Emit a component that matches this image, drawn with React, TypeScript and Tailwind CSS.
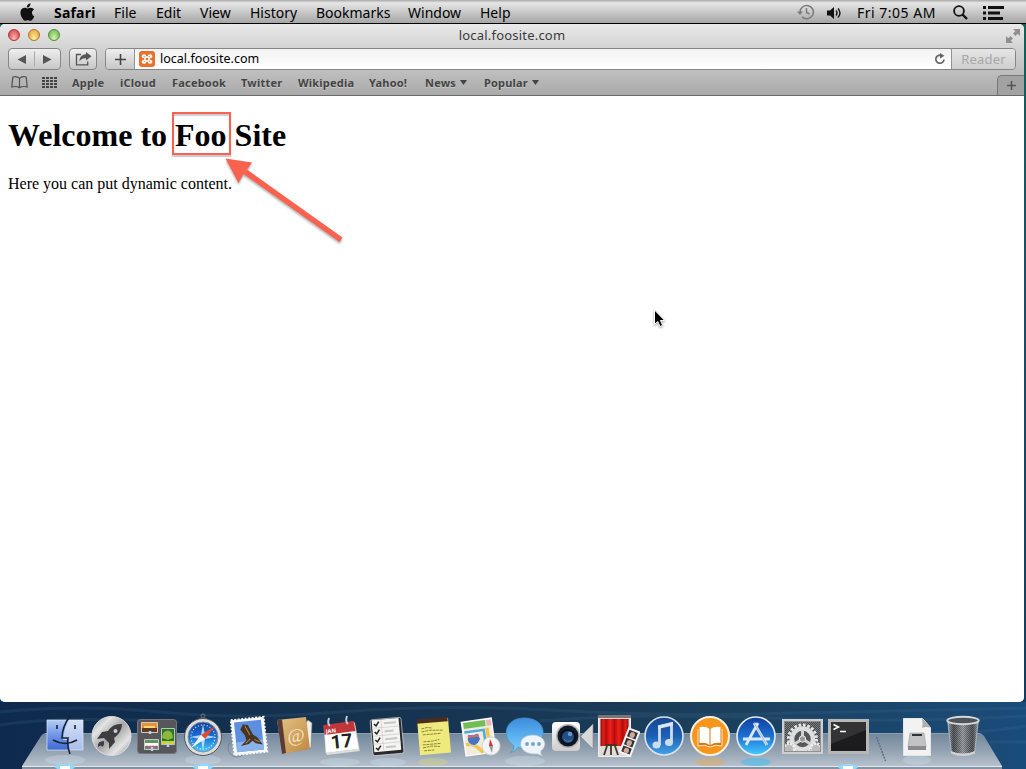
import React from "react";

const menus = [
  { label: "File", w: "w-[42px]" },
  { label: "Edit", w: "w-[44px]" },
  { label: "View", w: "w-[50px]" },
  { label: "History", w: "w-[66px]" },
  { label: "Bookmarks", w: "w-[92px]" },
  { label: "Window", w: "w-[72px]" },
  { label: "Help", w: "w-[40px]" },
];

const bookmarks = [
  { label: "Apple", w: "w-[48px]" },
  { label: "iCloud", w: "w-[52px]" },
  { label: "Facebook", w: "w-[69px]" },
  { label: "Twitter", w: "w-[57px]" },
  { label: "Wikipedia", w: "w-[71px]" },
  { label: "Yahoo!", w: "w-[56px]" },
  { label: "News", w: "w-[59px]", menu: true },
  { label: "Popular", w: "w-[60px]", menu: true },
];

function MenuBar() {
  return (
    <header className="flex h-6 w-full shrink-0 items-center border-b border-black bg-linear-to-b from-[#a8a8a8] via-[#e6e6e6] via-12% to-[#a6a6a6] pt-[2px] text-[14px] text-black">
      <svg className="ml-[19px] h-[19px] w-[17px]" viewBox="0 0 17 19">
        <path d="M11.5.3c.1 1.2-.4 2.3-1.1 3.1-.7.8-1.7 1.3-2.6 1.2-.1-1.1.4-2.2 1-2.9C9.500.9 10.600.4 11.500.3z" fill="#111" />
        <path d="M15 6.500c-1.400.8-2 2-2 3.200 0 1.700 1 2.900 2.300 3.500-.4 1.200-1 2.200-1.800 3.200-.7.9-1.400 1.400-2.300 1.400-.9 0-1.300-.5-2.500-.5s-1.600.5-2.500.5c-1 0-1.700-.8-2.400-1.700C1.800 13.500.8 9.900 1.800 7.400 2.500 5.700 4 4.700 5.500 4.700c1.200 0 2 .7 3.100.7 1 0 1.800-.7 3.200-.7 1.200 0 2.400.7 3.200 1.800z" fill="#111" />
      </svg>
      <span className="ml-[18px] w-[60px] font-bold tracking-[0.2px]">Safari</span>
      {menus.map((m) => (
        <span key={m.label} className={m.w}>{m.label}</span>
      ))}
      <div className="ml-auto flex items-center">
        <svg className="mr-[12px] h-[17px] w-[18px]" viewBox="0 0 18 17" fill="none" stroke="#7b7b7b" strokeWidth="1.5">
          <path d="M3 8A6.700 6.700 0 1 1 5 12.900M9.500 4v4.500l3 1.500" />
          <path d="M0 7.500h6L3 11z" fill="#7b7b7b" stroke="none" />
        </svg>
        <svg className="mr-[15px] h-[14px] w-[15px]" viewBox="0 0 15 14">
          <path d="M0 4.500h3L7 1v12L3 9.500H0z" fill="#111" />
          <path d="M9 4.500q2 2.500 0 5M11 2.500q4 4.500 0 9" fill="none" stroke="#111" strokeWidth="1.400" />
        </svg>
        <span className="w-[96px] tracking-[0.5px] whitespace-nowrap">Fri 7:05 AM</span>
        <svg className="h-[15px] w-[15px]" viewBox="0 0 15 15" fill="none" stroke="#111">
          <circle cx="6" cy="6" r="4.900" strokeWidth="1.800" />
          <path d="M9.500 9.500 14 14" strokeWidth="2.400" />
        </svg>
        <svg className="mr-[22px] ml-[15px] h-[14px] w-[21px]" viewBox="0 0 21 14" fill="#111">
          <path d="M0 0h3v3H0zM5 0h16v3H5zM0 5.500h3v3H0zM5 5.500h12v3H5zM0 11h3v3H0zM5 11h15v3H5z" />
        </svg>
      </div>
    </header>
  );
}

function TitleBar() {
  return (
    <div className="flex h-6 items-center">
      <div className="-mt-[2px] ml-2 flex w-[56px] gap-2">
        <i className="h-3 w-3 rounded-full border border-[#a33b3b] bg-radial-[at_50%_85%] from-[#ffb9b4] to-[#d42f3b]" />
        <i className="h-3 w-3 rounded-full border border-[#a9762f] bg-radial-[at_50%_85%] from-[#fff19a] to-[#e3942a]" />
        <i className="h-3 w-3 rounded-full border border-[#518a3b] bg-radial-[at_50%_85%] from-[#d5f7ac] to-[#62ac45]" />
      </div>
      <div className="flex-1 pr-[4px] text-center text-[13px] tracking-[0.2px] text-[#3b3b3b]">local.foosite.com</div>
      <svg className="-mt-[1px] mr-[4px] ml-[42px] h-[14px] w-[14px]" viewBox="0 0 14 14" fill="#8f8f8f">
        <path d="M7 0h7v7l-2.300-2.300L9.500 7 7 4.500l2.300-2.200zM0 7l2.300 2.300L4.500 7 7 9.500l-2.300 2.200L7 14H0z" />
      </svg>
    </div>
  );
}

function Toolbar() {
  return (
    <div className="flex h-[22px] px-2 text-[#555]">
      <div className="flex w-[53px] items-center rounded-[4px] border border-[#858585] bg-linear-to-b from-[#efefef] to-[#c7c7c7]">
        <svg className="h-5 w-[51px]" viewBox="0 0 51 20" fill="#555">
          <path d="M17 6v9L8.500 10.500zM34 6v9l8.500-4.500z" />
          <path d="M25 2.500h1v15h-1z" fill="#aaa" />
        </svg>
      </div>
      <div className="ml-2 flex w-[28px] items-center justify-center rounded-[4px] border border-[#858585] bg-linear-to-b from-[#efefef] to-[#c7c7c7]">
        <svg className="h-[14px] w-[17px]" viewBox="0 0 17 14">
          <path d="M6 2.500H1.500v10.300h11.200V9.500" fill="none" stroke="#555" strokeWidth="1.300" />
          <path d="M11 0l5.500 4.300L11 8.500V6.200C8 6 6 7 4.500 9.500 4.500 5 7 2.500 11 2.300z" fill="#555" />
        </svg>
      </div>
      <div className="ml-2 flex flex-1 overflow-hidden rounded-[4px] border border-[#858585]">
        <div className="flex w-[29px] items-center justify-center border-r border-[#929292] bg-linear-to-b from-[#efefef] to-[#c7c7c7]">
          <svg className="h-[11px] w-[11px]" viewBox="0 0 11 11"><path d="M5.500 0v11M0 5.500h11" stroke="#444" strokeWidth="1.600" /></svg>
        </div>
        <div className="flex flex-1 items-center bg-linear-to-b from-[#f2f2f2] to-white pl-1">
          <svg className="h-4 w-4" viewBox="0 0 16 16">
            <rect width="16" height="16" rx="3" fill="#e8722c" />
            <path d="M6.300 5.700Q8 6.600 9.700 5.700M6.300 10.300Q8 9.400 9.700 10.300M5.700 6.300Q6.600 8 5.700 9.700M10.300 6.300Q9.400 8 10.300 9.700" fill="none" stroke="#fff" strokeWidth="1.700" />
            <path d="M5.600 6.500Q3.500 6.500 3.500 5.200 3.500 4 4.900 4 6.500 4 6.500 5.600M10.400 6.500q2.100 0 2.100-1.300Q12.500 4 11.100 4 9.500 4 9.500 5.600M5.600 9.500q-2.100 0-2.100 1.300Q3.500 12 4.900 12q1.600 0 1.600-1.600M10.400 9.500q2.100 0 2.100 1.300 0 1.200-1.400 1.200-1.600 0-1.600-1.600" fill="none" stroke="#fff" strokeWidth="1.700" />
          </svg>
          <span className="ml-[5px] flex-1 pt-[1px] text-[12.500px] text-black">local.foosite.com</span>
          <svg className="mr-[5px] h-3 w-3" viewBox="0 0 12 12">
            <path d="M7 2.200A4.100 4.100 0 1 0 10 6.500" fill="none" stroke="#666" strokeWidth="1.700" />
            <path d="M6 0l4.500 2.800L6 5.500z" fill="#666" />
          </svg>
        </div>
        <div className="flex w-[64px] items-center justify-center border-l border-[#929292] bg-linear-to-b from-[#e6e6e6] to-[#cecece] pt-[1px] text-[13px] tracking-[0.2px] text-[#a8a8a8]">Reader</div>
      </div>
    </div>
  );
}

function BookmarksBar() {
  return (
    <div className="flex h-[25px] items-center text-[11px] font-bold tracking-[0.2px] text-[#444] [text-shadow:0_1px_0_#c8c8c8]">
      <svg className="ml-[11px] h-[13px] w-[17px]" viewBox="0 0 17 13" fill="none" stroke="#505050" strokeWidth="1.200">
        <path d="M8.500 2.300Q6-.2 1.800 1L.8 11q4.500-1.300 7.700.8 3.200-2.100 7.700-.8l-1-10Q11-.2 8.500 2.300zM8.500 2.300v9.500" />
      </svg>
      <svg className="ml-[14px] h-[11px] w-[15px]" viewBox="0 0 15 11" fill="#444">
        {[0, 3, 6, 9].map((y) => [0, 4, 8, 12].map((x) => <rect key={`${x}-${y}`} x={x} y={y} width="3" height="2" />))}
      </svg>
      <div className="ml-[15px] flex flex-1 pt-[2px]">
        {bookmarks.map((b) => (
          <span key={b.label} className={`${b.w} flex items-center gap-[4px] whitespace-nowrap`}>
            {b.label}
            {b.menu && <svg className="mb-[3px] h-[5px] w-[7px]" viewBox="0 0 7 5"><path d="M0 0h7L3.500 5z" fill="#444" /></svg>}
          </span>
        ))}
      </div>
      <div className="mt-[5px] flex h-5 w-[27px] items-center justify-center rounded-tl-[5px] border-t border-l border-[#777] bg-[#a2a2a2]">
        <svg className="h-[9px] w-[9px]" viewBox="0 0 9 9"><path d="M4.500 0v9M0 4.500h9" stroke="#555" strokeWidth="1.600" /></svg>
      </div>
    </div>
  );
}

function Page() {
  return (
    <main className="relative flex-1 bg-white px-2 pt-[21px] font-['Liberation_Serif',serif] text-black">
      <h1 className="text-[32px] leading-[37px] font-bold">Welcome to Foo Site</h1>
      <p className="mt-[21px] text-[16px] leading-[18px]">Here you can put dynamic content.</p>
      <div className="absolute top-[16px] left-[172px] h-[43px] w-[59px] border-2 border-[#fa6250] shadow-[0_2px_1px_rgba(0,0,40,0.2),inset_0_2px_1px_rgba(0,0,40,0.2)]" />
      <svg className="absolute top-[58px] left-[220px] h-[96px] w-[130px] drop-shadow-[0_2px_1px_rgba(0,0,0,0.3)]" viewBox="0 0 130 96">
        <path d="M5.500 4.500 32 8.500l-5 7L122.500 83.500l-3 4.500L23.500 20 18.500 29z" fill="#fa6250" />
      </svg>
      <svg className="absolute top-[213px] left-[653px] h-[20px] w-[13px] drop-shadow-[0_1px_1px_rgba(0,0,0,0.4)]" viewBox="0 0 13 20">
        <path d="M1.500 1v14.500l3.300-3 2.300 5 2.500-1.200-2.200-4.800h4.300z" fill="#000" stroke="#fff" strokeWidth="1" />
      </svg>
    </main>
  );
}

function Tile({ children }: { children: React.ReactNode }) {
  return <svg className="h-[54px] w-[46px] shrink-0" viewBox="0 0 46 54">{children}</svg>;
}

function Defs() {
  return (
    <defs>
      <linearGradient id="sea" x1="0" y1="0" x2="1" y2="0"><stop stopColor="#0e2b4e" /><stop offset=".35" stopColor="#15324f" /><stop offset=".7" stopColor="#1b3f5c" /><stop offset="1" stopColor="#1a4c7a" /></linearGradient>
      <linearGradient id="shelf" x1="0" y1="0" x2="0" y2="1"><stop stopColor="#71879c" /><stop offset=".55" stopColor="#94a3b2" /><stop offset="1" stopColor="#b7c1cc" /></linearGradient>
      <linearGradient id="blue" x1="0" y1="0" x2="0" y2="1"><stop stopColor="#123f9c" /><stop offset=".5" stopColor="#1c6fd4" /><stop offset="1" stopColor="#45cbff" /></linearGradient>
      <linearGradient id="navy" x1="0" y1="0" x2="0" y2="1"><stop stopColor="#164791" /><stop offset=".5" stopColor="#1d5fb5" /><stop offset="1" stopColor="#44a3e9" /></linearGradient>
      <linearGradient id="finder" x1="0" y1="0" x2="0" y2="1"><stop stopColor="#b5ccf6" /><stop offset=".5" stopColor="#7096e6" /><stop offset="1" stopColor="#3f6ad2" /></linearGradient>
      <linearGradient id="metal" x1="0" y1="0" x2="1" y2="1"><stop stopColor="#8d8d8d" /><stop offset=".25" stopColor="#e4e4e4" /><stop offset=".5" stopColor="#a4a4a4" /><stop offset=".75" stopColor="#e4e4e4" /><stop offset="1" stopColor="#888" /></linearGradient>
      <linearGradient id="gold" x1="0" y1="0" x2="1" y2="1"><stop stopColor="#e6c384" /><stop offset="1" stopColor="#bd8742" /></linearGradient>
      <linearGradient id="paper" x1="0" y1="0" x2="0" y2="1"><stop stopColor="#fff" /><stop offset="1" stopColor="#ccc" /></linearGradient>
      <linearGradient id="red" x1="0" y1="0" x2="1" y2="0"><stop stopColor="#8d0508" /><stop offset=".1" stopColor="#e2221a" /><stop offset=".2" stopColor="#b80b0c" /><stop offset=".35" stopColor="#ee2219" /><stop offset=".5" stopColor="#b80b0c" /><stop offset=".65" stopColor="#ee2219" /><stop offset=".8" stopColor="#b00a0b" /><stop offset=".9" stopColor="#e2221a" /><stop offset="1" stopColor="#8d0508" /></linearGradient>
      <linearGradient id="bubble" x1="0" y1="0" x2="0" y2="1"><stop stopColor="#3b8cdd" /><stop offset="1" stopColor="#7bd3ff" /></linearGradient>
      <linearGradient id="basket" x1="0" y1="0" x2="1" y2="0"><stop stopColor="#fff" stopOpacity=".5" /><stop offset=".2" stopColor="#222" stopOpacity=".3" /><stop offset=".5" stopColor="#fff" stopOpacity=".3" /><stop offset=".8" stopColor="#222" stopOpacity=".25" /><stop offset="1" stopColor="#fff" stopOpacity=".45" /></linearGradient>
      <pattern id="mesh" width="2" height="2" patternUnits="userSpaceOnUse"><rect width="2" height="2" fill="#777c81" /><rect width="1" height="1" fill="#44494e" /><rect x="1" y="1" width="1" height="1" fill="#44494e" /></pattern>
    </defs>
  );
}

function Dock() {
  return (
    <footer className="relative h-[67px] w-full overflow-hidden">
      <svg className="absolute inset-0 h-[67px] w-full" viewBox="0 0 1026 67">
        <Defs />
        <path d="M0 0h1026v67H0z" fill="url(#sea)" />
        <path d="M0 10q80-8 160 0t180 0 210-2 200 4 276-6M0 23q60-9 180-3M540 19q100-8 230-3t256-2M900 28q60 7 126-4M990 40h36" fill="none" stroke="#477596" strokeWidth="3" opacity=".18" />
        <path d="M46 31h933q3 0 5 3l18 30H22l19-30q2-3 5-3z" fill="url(#shelf)" />
        <path d="M45 31.500h935" stroke="#8c9eaf" strokeWidth="1" />
        <path d="M22 64h980v1.500H22z" fill="#e0e7ed" />
        <path d="M22 65.500h980v1.500H22z" fill="#8593a1" />
        <g fill="#dceeff" opacity=".25"><ellipse cx="65" cy="58" rx="20" ry="5" /><ellipse cx="203" cy="58" rx="18" ry="5" /><ellipse cx="340" cy="60" rx="20" ry="4" /><ellipse cx="388" cy="60" rx="18" ry="4" /><ellipse cx="525" cy="59" rx="20" ry="5" /><ellipse cx="917" cy="58" rx="14" ry="5" /></g>
        <ellipse cx="710" cy="60" rx="15" ry="4" fill="#e4a960" opacity=".55" />
        <ellipse cx="756" cy="60" rx="15" ry="4" fill="#49bbef" opacity=".6" />
        <ellipse cx="433" cy="60" rx="15" ry="4" fill="#d8d477" opacity=".4" />
        {[65, 203, 848].map((x) => <g key={x}><ellipse cx={x} cy="65" rx="10" ry="3" fill="#8ddcff" /><rect x={x - 5} y="64" width="10" height="3" fill="#fff" /></g>)}
      </svg>
      <div className="relative mt-[5px] ml-[42px] flex">
        <Tile>
          <path d="M5 13h36v30H5z" fill="url(#finder)" stroke="#dbe7f8" strokeWidth=".7" />
          <path d="M27 13h14v30H27l-1-10h-5q1-12 6-20z" fill="#e6ecf6" opacity=".65" />
          <path d="M28 9q-8 11-8 22h6q-1 8 2 16" fill="none" stroke="#172434" strokeWidth="1.600" />
          <path d="M15 18v4M33 18v4M11 33q12 7 24 0" fill="none" stroke="#172434" strokeWidth="1.600" />
        </Tile>
        <Tile>
          <circle cx="23.500" cy="29" r="19.500" fill="url(#metal)" stroke="#ddd" />
          <path d="M34 17q-9-1-14 7l-6 1-5 7 7-1 5 5 0 6 6-7-1-4q8-6 8-14zM16 34q-7 0-6 6 4-3 4 0 2-1 2-3M18 36l-2 4" fill="#3d3d40" />
          <circle cx="27.500" cy="24" r="2" fill="#ccc" />
        </Tile>
        <Tile>
          <rect x="3.500" y="12.500" width="39" height="34" rx="3" fill="#56565b" stroke="#77777b" />
          <g stroke="#eee" strokeWidth=".7"><path d="M7.500 15.500h16v10h-16z" fill="#e6913a" /><path d="M27.500 21.500h13v16h-13z" fill="#27772e" /><path d="M10.500 32.500h14v10h-14z" fill="#5d9560" /></g>
          <path d="M8 21h15v4H8z" fill="#5e3a26" /><path d="M10 19h11v2H10z" fill="#ffd76b" />
          <path d="M29 26q5-5 9 0l1 5-5 2-6-2z" fill="#8eb73c" /><path d="M28 34h12v3H28z" fill="#c9d52b" />
          <path d="M11 36h13v3H11z" fill="#f7f7f7" /><path d="M12 40h11" stroke="#ca4887" strokeWidth="2.500" strokeDasharray="2 1" />
          <path d="M16 24v3M34 36v4M18 40v4" stroke="#b4d0f2" strokeWidth="2.500" />
        </Tile>
        <Tile>
          <circle cx="23" cy="9" r="2" fill="none" stroke="#777" />
          <circle cx="23" cy="30" r="18.500" fill="#ddd" stroke="#52575c" />
          <circle cx="23" cy="30" r="15" fill="url(#blue)" stroke="#879097" />
          <circle cx="23" cy="30" r="12" fill="none" stroke="#d8f4ff" strokeWidth="1.200" strokeDasharray="1 2" />
          <path d="M23 17l2 11 11 2-11 2-2 12-2-12-11-2 11-2z" fill="#d4efff" opacity=".8" />
          <path d="M35 19L25 32l-4-4z" fill="#e64b27" /><path d="M11 41l10-13 4 4z" fill="#f6f6f2" />
        </Tile>
        <Tile>
          <circle cx="11" cy="41" r="9" fill="none" stroke="#5c6d7d" opacity=".5" />
          <g transform="rotate(-6 23 29)"><path d="M6.500 11.500h33v35h-33z" fill="#f6f7f7" stroke="#f6f7f7" strokeWidth="2" strokeDasharray="2 1.500" /><path d="M9.500 14h27v30h-27z" fill="#5c8fe0" /><path d="M9.500 34h27v10h-27z" fill="#8ab3ea" />
          <path d="M18 17l5 1 4 10 4 3 5 8-7-2-3-3-4 3-8 1 6-5-1-5-4-6z" fill="#49351f" /><path d="M20 19l4 9M24 32l-5 4M28 33l5 3" stroke="#a88a55" strokeWidth="1" /></g>
        </Tile>
        <Tile>
          <path d="M11 46l28-5 1-25-4-3z" fill="#eee" stroke="#777" strokeWidth=".6" />
          <path d="M5 13l29-3 4 32-28 5z" fill="url(#gold)" /><path d="M5 13l5-.5L14 46l-4 1z" fill="#593c38" />
          <text x="15" y="35" fill="#f5e5c3" fontFamily="Liberation Serif" fontSize="19" transform="rotate(-7 23 28)">@</text>
        </Tile>
        <Tile>
          <path d="M6 20l31-4 5 27-34 5z" fill="#aaa" /><path d="M6 19l30-4 5 27-33 4z" fill="#fff" stroke="#ddd" strokeWidth=".6" />
          <path d="M5.500 18l30-4 2 10-31 4z" fill="#c2353a" /><path d="M11 11q-2 6 1 8M29 9q-2 6 1 8" fill="none" stroke="#c6cbd0" strokeWidth="2" />
          <text x="8" y="26.500" fill="#fff" fontFamily="Open Sans" fontWeight="700" fontSize="5.500" transform="rotate(-7 8 26)">JAN</text>
          <text x="13.500" y="42" fill="#222" fontFamily="Roboto" fontWeight="700" fontSize="19" transform="rotate(-6 13 42)">17</text>
          <path d="M8 46l33-4 1 2-33 4z" fill="#ddd" />
        </Tile>
        <Tile>
          <g transform="rotate(-5 23 29)"><rect x="7.500" y="11.500" width="31" height="36" rx="2" fill="#29292b" stroke="#eee" strokeWidth=".6" /><path d="M9 12h27v32H9z" fill="#f4f4f2" />
          <path d="M9 20h27M9 28h27M9 36h27" stroke="#d6d6d6" /><path d="M18.500 12v32" stroke="#e7a9a9" strokeWidth=".5" /><path d="M11 16l2 2 3-4M11 24l2 2 3-4M11 32l2 2 3-4M11 40l2 2 3-4" fill="none" stroke="#222" strokeWidth="1.500" /><path d="M21 16h12M21 24h9M21 32h12M21 40h10" stroke="#c6c6c6" strokeWidth="2" /></g>
        </Tile>
        <Tile>
          <g transform="rotate(-5 23 29)"><path d="M8.500 12h31v35h-31z" fill="#f0e97c" /><path d="M8 11h31v4.500H8z" fill="#4b2d20" />
          <path d="M12 21l6-1 5 1M12 24l8-1 13 1M13 27h18M13 34h9l7-1M12 37h18M12 40l9-1 8 1M13 43h10" fill="none" stroke="#77722e" strokeWidth=".8" strokeDasharray="3 .7" /></g>
        </Tile>
        <Tile>
          <g transform="rotate(-8 23 29)"><path d="M7.500 13h30v34h-30z" fill="#f1ebda" stroke="#fafafa" strokeWidth="1.500" /><path d="M9 14h22v6H9z" fill="#72bd55" /><path d="M32 14h5v6h-5z" fill="#e9b6c0" />
          <path d="M9 23.500h19.500v18" fill="none" stroke="#50a8e1" strokeWidth="2.500" /><path d="M9 36q8-2 16 10M32 22v22" fill="none" stroke="#efc64a" strokeWidth="3.500" /><path d="M12 26q5 2 10 0l2 6q-2 5-7 6-6-2-6-7z" fill="#4776bd" stroke="#fff" strokeWidth=".6" /><path d="M12 28.500h11" stroke="#d96869" strokeWidth="2" /></g>
          <circle cx="35" cy="39" r="9" fill="#f4f4f4" stroke="#d1d1d1" /><path d="M34 32l3 7h-4z" fill="#cf312b" /><path d="M33 39h4l-1 7z" fill="#999" />
        </Tile>
        <Tile>
          <path d="M8 46q5-3 4-7C-2 29 4 11 22 11c25 0 25 26 3 30q-7 1-9-1-2 4-8 6z" fill="url(#bubble)" stroke="#4a93c9" strokeWidth=".7" />
          <path d="M41 49q-3-2-2-5c8-6 3-16-8-16-17 0-16 18 0 19h5q1 1 5 2z" fill="#edf5fa" stroke="#acb9c8" strokeWidth=".7" />
          <g fill="#77a3c1"><circle cx="25" cy="37" r="1.900" /><circle cx="31" cy="37" r="1.900" /><circle cx="37" cy="37" r="1.900" /></g>
        </Tile>
        <Tile>
          <rect x="4" y="15" width="28" height="29" rx="4" fill="url(#paper)" /><circle cx="20" cy="29" r="12" fill="#b5b5b5" /><circle cx="20" cy="29" r="10.500" fill="#111b2a" /><circle cx="20" cy="30" r="7" fill="#244f82" stroke="#09101b" strokeWidth="2" /><circle cx="22" cy="27" r="2.200" fill="#6597c9" /><path d="M16 32q3 4 8 1" fill="none" stroke="#4b83be" />
          <path d="M33 29l12-12v25l-12-12z" fill="#d8d8d8" stroke="#888" strokeWidth=".6" />
        </Tile>
        <Tile>
          <path d="M4.500 8.500h32v41h-32z" fill="#dddcd9" stroke="#eee" /><path d="M6.500 12h28v27h-28z" fill="url(#red)" /><path d="M4 8h33v3H4z" fill="#777" />
          <path d="M11 38h12M13 39l-3 9M21 39l3 9M17 38v10" stroke="#493322" strokeWidth="1.800" />
          <g transform="rotate(21 34 35)"><path d="M29 21h13v27H29z" fill="#f5f5f5" /><path d="M31 23h9v7h-9zM31 31.500h9v7h-9zM31 40h9v6h-9z" fill="#333" /><g fill="#cfa698"><ellipse cx="35.500" cy="27" rx="2.600" ry="3" /><ellipse cx="35.500" cy="35.500" rx="2.600" ry="3" /><ellipse cx="35.500" cy="43.500" rx="2.600" ry="2.700" /></g></g>
        </Tile>
        <Tile>
          <circle cx="24" cy="29" r="19" fill="url(#navy)" stroke="#d9e2ea" strokeWidth="1.600" /><path d="M19.500 38V19.500l12-3V35" fill="none" stroke="#cfdcea" strokeWidth="2.800" /><path d="M18 22l15-3.500V15l-15 3.500z" fill="#dce6f0" /><ellipse cx="16.500" cy="38" rx="4" ry="3.500" fill="#cfdcea" /><ellipse cx="29" cy="35.500" rx="4" ry="3.500" fill="#cfdcea" />
        </Tile>
        <Tile>
          <circle cx="24" cy="29" r="19" fill="#f7951d" stroke="#fff3df" strokeWidth="2" /><path d="M12 22v17q7-2 12 1 5-3 12-1V22" fill="#d27810" stroke="#ffeed3" /><path d="M13.500 20q7-1 10 2v16q-4-3-10-2zM34.500 20q-7-1-10 2v16q4-3 10-2z" fill="#fff" />
        </Tile>
        <Tile>
          <circle cx="24" cy="29" r="19" fill="url(#blue)" stroke="#e2edf5" strokeWidth="1.600" /><path d="M26 16L14 38M22 16l13 22M11 32h27" fill="none" stroke="#dbe8f3" strokeWidth="2.800" /><path d="M22 16l13 22" stroke="#8fa9bf" strokeWidth=".8" />
        </Tile>
        <Tile>
          <rect x="5" y="13" width="39" height="33" fill="#8f8f90" stroke="#cfcfcf" strokeWidth="2" /><path d="M7 15h35v29H7z" fill="url(#mesh)" />
          <svg x="7" y="15" width="35" height="29" viewBox="7 15 35 29">
            <circle cx="24.500" cy="32" r="14" fill="none" stroke="#e6e6e6" strokeWidth="3" strokeDasharray="2.600 1.800" /><circle cx="24.500" cy="32" r="10.500" fill="#55565a" stroke="#dedede" strokeWidth="4.500" /><path d="M24.500 32V23M24.500 32l8 5M24.500 32l-8 5" stroke="#d0d0d0" strokeWidth="3" /><circle cx="24.500" cy="32" r="3.200" fill="#999" stroke="#eee" />
            <g fill="#bbb" stroke="#f0f0f0"><circle cx="11" cy="42" r="5.500" strokeWidth="3" strokeDasharray="2 1.300" /><circle cx="38" cy="42" r="5.500" strokeWidth="3" strokeDasharray="2 1.300" /></g>
          </svg>
        </Tile>
        <Tile>
          <rect x="5.500" y="13.500" width="38" height="32" fill="#1c1c1e" stroke="#b7b7b3" strokeWidth="3" /><path d="M7 15h35v8L7 37z" fill="#333335" /><path d="M9.500 17.500l5 2.500-5 2.500M16 24.500h6" fill="none" stroke="#fff" strokeWidth="1.500" />
        </Tile>
        <svg className="h-[54px] w-6" viewBox="0 0 24 54"><path d="M6.500 30l9 24" stroke="#56687a" strokeWidth="1.300" strokeDasharray="2 1" /></svg>
        <Tile>
          <path d="M9.500 11.500h19l8 9v28h-27z" fill="#f2f2f2" stroke="#e5e5e5" /><path d="M28 11q1 6 0 10 4-2 9 0z" fill="#aeaeae" /><path d="M16 26h14l2 14H14z" fill="#c1c3c4" stroke="#999" strokeWidth=".6" /><path d="M14 39h18v4H14z" fill="#8a8a8c" /><path d="M18 27h10v2H18z" fill="#333" />
        </Tile>
        <Tile>
          <path d="M7.500 13l4 33q11.500 5 23 0l4-33z" fill="url(#mesh)" /><path d="M7.500 13l4 33q11.500 5 23 0l4-33z" fill="url(#basket)" stroke="#b8bcc0" strokeWidth=".8" /><ellipse cx="23" cy="13.500" rx="15.700" ry="3.700" fill="#4d545a" stroke="#d6d8d9" strokeWidth="2" /><path d="M11 44q12 5 24 0v2.500q-12 5-24 0z" fill="#d0d2d4" />
        </Tile>
      </div>
    </footer>
  );
}

export default function App() {
  return (
    <div className="flex h-[769px] w-[1026px] flex-col overflow-hidden bg-linear-to-b from-[#12634f] via-[#1b4e68] via-35% to-[#12395c] font-['Noto_Sans',sans-serif]">
      <MenuBar />
      <section className="flex h-[678px] w-[1024px] shrink-0 flex-col overflow-hidden rounded-[5px] bg-white">
        <div className="h-[72px] border-b border-[#696969] bg-linear-to-b from-[#e9e9e9] via-[#c9c9c9] via-50% to-[#aaaaaa]">
          <TitleBar />
          <Toolbar />
          <BookmarksBar />
        </div>
        <Page />
      </section>
      <Dock />
    </div>
  );
}
